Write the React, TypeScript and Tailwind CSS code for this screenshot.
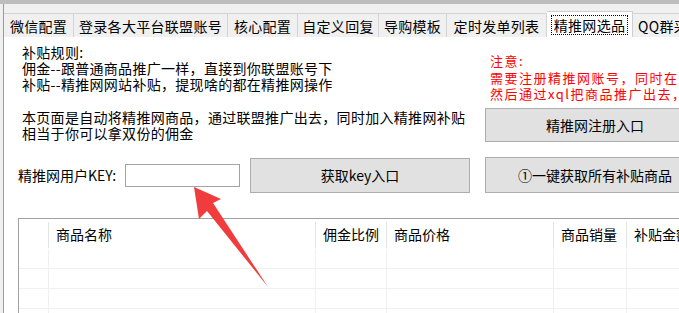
const tabs = [
  { label: "微信配置", w: "w-[70px]" },
  { label: "登录各大平台联盟账号", w: "w-[154px]" },
  { label: "核心配置", w: "w-[70px]" },
  { label: "自定义回复", w: "w-[81px]" },
  { label: "导购模板", w: "w-[68px]" },
  { label: "定时发单列表", w: "w-[100px]" },
];

const columns = [
  { label: "", w: "w-[30px]" },
  { label: "商品名称", w: "w-[267px]" },
  { label: "佣金比例", w: "w-[71px]" },
  { label: "商品价格", w: "w-[167px]" },
  { label: "商品销量", w: "w-[73px]" },
  { label: "补贴金额", w: "w-[100px]" },
];

function Arrow() {
  // 红色标注箭头，指向KEY输入框
  return (
    <svg
      className="pointer-events-none absolute left-0 top-0"
      width="679"
      height="313"
      viewBox="0 0 679 313"
    >
      <polygon
        points="194,187 221,199 213,203 268,287 207,211 199,219"
        fill="#f03c3c"
      />
    </svg>
  );
}

export default function App() {
  return (
    <div className="relative flex h-[313px] w-[679px] flex-col overflow-hidden bg-white font-['Noto_Sans_CJK_SC',sans-serif] text-[14px] text-black">
      <div className="h-[4px] shrink-0 bg-[#bdbdbd]" />
      <div className="flex min-h-0 flex-1">
        <div className="w-[4px] shrink-0 border-r border-[#9a9a9a] bg-[#f0f0f0]" />
        <div className="flex min-w-0 flex-1 flex-col">
          {/* 顶部标签页 */}
          <div className="h-[9px] shrink-0 bg-[#f0f0f0]" />
          <div className="flex h-[24px] shrink-0 items-stretch whitespace-nowrap bg-[#f0f0f0] tracking-[0.3px]">
            {tabs.map((t) => (
              <div
                key={t.label}
                className={`${t.w} flex shrink-0 items-center justify-center border-r border-t border-[#d4d4d4] leading-none`}
              >
                {t.label}
              </div>
            ))}
            <div className="-mt-[2px] flex w-[86px] shrink-0 items-center justify-center border-r border-t border-[#cfcfcf] bg-white">
              <span className="border border-dotted border-black px-[2px] py-[2px] leading-none">
                精推网选品
              </span>
            </div>
            <div className="flex shrink-0 items-center border-t border-[#d4d4d4] pl-[5px] leading-none">
              QQ群采集
            </div>
          </div>

          {/* 内容区域 */}
          <div className="flex flex-1 flex-col bg-white pl-[14px]">
            <div className="flex h-[120px] shrink-0">
              <div className="w-[467px] shrink-0 whitespace-nowrap pl-[4px] pt-[7px] leading-[16px] tracking-[0.3px]">
                <div>补贴规则:</div>
                <div>佣金--跟普通商品推广一样，直接到你联盟账号下</div>
                <div>补贴--精推网网站补贴，提现啥的都在精推网操作</div>
                <div className="h-[17px]" />
                <div>本页面是自动将精推网商品，通过联盟推广出去，同时加入精推网补贴</div>
                <div>相当于你可以拿双份的佣金</div>
              </div>
              <div className="flex flex-col pt-[16px]">
                <div className="h-[55px] whitespace-nowrap pl-[5px] text-[13px] leading-[16.5px] tracking-[1.5px] text-[#ff0000]">
                  <div>注意:</div>
                  <div>需要注册精推网账号，同时在</div>
                  <div>然后通过xql把商品推广出去，</div>
                </div>
                <button className="flex h-[34px] w-[220px] shrink-0 items-center justify-center border border-[#adadad] bg-[#e1e1e1]">
                  精推网注册入口
                </button>
              </div>
            </div>

            <div className="flex h-[36px] shrink-0 items-center">
              <label className="w-[107px] shrink-0 whitespace-nowrap">精推网用户KEY:</label>
              <input
                type="text"
                className="h-[23px] w-[115px] shrink-0 border border-[#a3a3a3] bg-white outline-none"
              />
              <button className="ml-[10px] flex h-[35px] w-[220px] shrink-0 items-center justify-center border border-[#adadad] bg-[#e1e1e1]">
                获取key入口
              </button>
              <button className="ml-[15px] flex h-[36px] w-[220px] shrink-0 items-center justify-center whitespace-nowrap border border-[#adadad] bg-[#e1e1e1]">
                ①一键获取所有补贴商品
              </button>
            </div>

            {/* 商品列表 */}
            <div className="mt-[25px] flex-1 border-l border-t border-[#a0a0a0] bg-white">
              <div className="flex h-[30px]">
                {columns.map((c, i) => (
                  <div key={i} className={`${c.w} relative flex shrink-0 items-center whitespace-nowrap pl-[7px]`}>
                    {c.label}
                    <div className="absolute right-0 top-[3px] h-[26px] w-px bg-[#e3e3e3]" />
                  </div>
                ))}
              </div>
              {[0, 1, 2].map((r) => (
                <div key={r} className="flex h-[20px] border-b border-[#f0f0f0]">
                  {columns.map((c, i) => (
                    <div key={i} className={`${c.w} shrink-0 border-r border-[#f0f0f0]`} />
                  ))}
                </div>
              ))}
              <div className="flex h-[20px]">
                {columns.map((c, i) => (
                  <div key={i} className={`${c.w} shrink-0 border-r border-[#f0f0f0]`} />
                ))}
              </div>
            </div>
          </div>
        </div>
      </div>
      <Arrow />
    </div>
  );
}
